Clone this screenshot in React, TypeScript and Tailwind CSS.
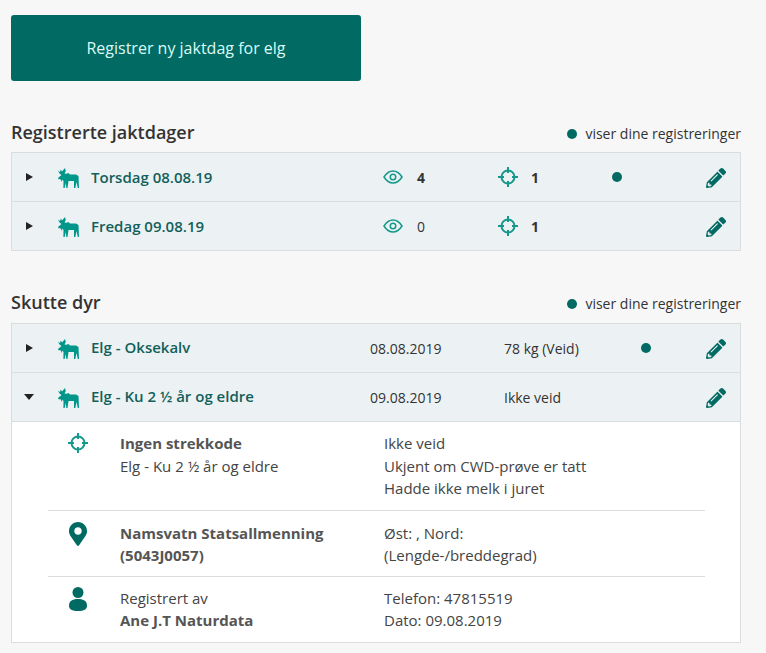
import { FaMapMarkerAlt, FaPencilAlt } from "react-icons/fa";

const Moose = () => (
  <svg viewBox="0 0 21 20" className="ml-[1px] mt-[1px] h-5 w-[21px] shrink-0 fill-[#00968a]">
    <path d="M0 2.500 2 4 2.800 1.500 4 3.500 7 0 7.800 3 6.500 5.500 8.500 5.800 10.500 5 12 6.500H18L20.500 8 21 20H19.800L18.500 14 17.300 20H16L16 13 10.500 13 9.500 20H8.300L7.800 15 6.600 20H5.400L5.500 13 4.500 11.500 3.800 14 2.800 11.500 0 11 .5 9.500 3.500 7 1.500 5.500z" />
  </svg>
);

const Crosshair = () => (
  <svg viewBox="0 0 20 20" className="h-5 w-5 shrink-0 fill-none stroke-[#16998c] stroke-2">
    <circle cx="10" cy="10" r="6.500" />
    <path d="M10 0v6M10 14v6M0 10h6M14 10h6" />
  </svg>
);

const Eye = () => (
  <svg viewBox="0 0 20 14" className="h-[14px] w-5 shrink-0 fill-none stroke-[#16998c] stroke-[1.500]">
    <path d="M1 7c2.500-4 5.500-6 9-6s6.500 2 9 6c-2.500 4-5.500 6-9 6s-6.500-2-9-6z" />
    <circle cx="10" cy="7" r="2.750" />
  </svg>
);

const Person = () => (
  <svg viewBox="0 0 18 24" className="h-6 w-[18px] fill-[#006a63]">
    <circle cx="9" cy="5.500" r="5.500" />
    <path d="M0 19c0-5 3-7 9-7s9 2 9 7c0 3-3 5-9 5s-9-2-9-5z" />
  </svg>
);

const Arrow = ({ open }: { open?: boolean }) => (
  <div className="flex w-[45px] shrink-0 pl-[14px]">
    {open ? (
      <div className="-ml-[2px] h-0 w-0 border-x-[5px] border-t-[6px] border-x-transparent border-t-[#222]" />
    ) : (
      <div className="h-0 w-0 border-y-[4.500px] border-l-[7px] border-y-transparent border-l-[#222]" />
    )}
  </div>
);

const Dot = () => <div className="h-[10px] w-[10px] rounded-full bg-[#006a63]" />;

const Legend = () => (
  <div className="flex items-center gap-2 text-[14px] text-[#333]">
    <Dot />
    <span>viser dine registreringer</span>
  </div>
);

const Pencil = () => <FaPencilAlt className="mt-[1px] ml-[1px] h-5 w-5 text-[#006a63]" />;

function DayRow({ title, seen, seenBold, dot, last }: { title: string; seen: string; seenBold?: boolean; dot?: boolean; last?: boolean }) {
  return (
    <div className={`flex items-center bg-[#ecf2f3] ${last ? "h-[48px]" : "h-[49px] border-b border-[#d9dddd]"}`}>
      <Arrow />
      <div className="flex w-[34px] shrink-0"><Moose /></div>
      <div className="w-[292px] shrink-0 text-[15px] font-semibold text-[#12605b]">{title}</div>
      <div className="flex w-[115px] shrink-0 items-center gap-[14px] text-[14px] text-[#333]">
        <Eye />
        <span className={seenBold ? "font-bold" : ""}>{seen}</span>
      </div>
      <div className="flex w-[114px] shrink-0 items-center gap-[13px] text-[14px] font-bold text-[#333]">
        <Crosshair />
        <span>1</span>
      </div>
      <div className="w-[93px] shrink-0">{dot && <Dot />}</div>
      <Pencil />
    </div>
  );
}

function AnimalRow({ title, date, weight, open, dot }: { title: string; date: string; weight: string; open?: boolean; dot?: boolean }) {
  return (
    <div className="flex h-[49px] items-center border-b border-[#d9dddd] bg-[#ecf2f3]">
      <Arrow open={open} />
      <div className="flex w-[34px] shrink-0"><Moose /></div>
      <div className="mb-[2px] w-[279px] shrink-0 text-[15px] font-semibold text-[#12605b]">{title}</div>
      <div className="w-[134px] shrink-0 text-[14px] text-[#333]">{date}</div>
      <div className="w-[137px] shrink-0 text-[14px] text-[#333]">{weight}</div>
      <div className="w-[64px] shrink-0">{dot && <Dot />}</div>
      <Pencil />
    </div>
  );
}

function DetailRow({ icon, left, right, className }: { icon: React.ReactNode; left: React.ReactNode; right: React.ReactNode; className: string }) {
  return (
    <div className={`flex border-[#d9dddd] ${className}`}>
      <div className="flex w-[72px] shrink-0 justify-center pr-[12px]">{icon}</div>
      <div className="w-[264px] shrink-0">{left}</div>
      <div>{right}</div>
    </div>
  );
}

export default function App() {
  return (
    <div className="h-[653px] overflow-hidden bg-[#f7f7f8] px-[11px] pt-[15px] font-['Open_Sans',sans-serif] text-[#333]">
      <div className="flex h-[66px] w-[350px] items-center justify-center rounded-[3px] bg-[#006a63] text-[16px] text-[#dcfaf5]">
        Registrer ny jaktdag for elg
      </div>

      <div className="mt-[38px] flex h-[33px] w-[730px] items-start justify-between">
        <h2 className="text-[18px] font-semibold text-[#333]">Registrerte jaktdager</h2>
        <div className="mt-[4px]"><Legend /></div>
      </div>
      <div className="w-[730px] border border-[#d9dddd]">
        <DayRow title="Torsdag 08.08.19" seen="4" seenBold dot />
        <DayRow title="Fredag 09.08.19" seen="0" last />
      </div>

      <div className="mt-[35px] flex h-[37px] w-[730px] items-start justify-between">
        <h2 className="mt-[3px] text-[18px] font-semibold text-[#333]">Skutte dyr</h2>
        <div className="mt-[7px]"><Legend /></div>
      </div>
      <div className="w-[730px] border border-[#d9dddd]">
        <AnimalRow title="Elg - Oksekalv" date="08.08.2019" weight="78 kg (Veid)" dot />
        <AnimalRow title="Elg - Ku 2 ½ år og eldre" date="09.08.2019" weight="Ikke veid" open />
        <div className="bg-white pl-[36px] pr-[35px] text-[15px] leading-[22px] text-[#444]">
          <DetailRow
            className="h-[89px] border-b pt-[11px]"
            icon={<Crosshair />}
            left={<><div className="-mt-[1px] mb-[1px] font-bold text-[#555]">Ingen strekkode</div><div>Elg - Ku 2 ½ år og eldre</div></>}
            right={<><div className="-mt-[1px] mb-[1px]">Ikke veid</div><div>Ukjent om CWD-prøve er tatt</div><div>Hadde ikke melk i juret</div></>}
          />
          <DetailRow
            className="h-[66px] border-b pt-[11px]"
            icon={<FaMapMarkerAlt className="h-6 w-[18px] text-[#006a63]" />}
            left={<div className="font-bold text-[#555]">Namsvatn Statsallmenning<br />(5043J0057)</div>}
            right={<><div>Øst: , Nord:</div><div>(Lengde-/breddegrad)</div></>}
          />
          <DetailRow
            className="h-[65px] pt-[10px]"
            icon={<Person />}
            left={<><div>Registrert av</div><div className="font-bold text-[#555]">Ane J.T Naturdata</div></>}
            right={<><div>Telefon: 47815519</div><div>Dato: 09.08.2019</div></>}
          />
        </div>
      </div>
    </div>
  );
}
